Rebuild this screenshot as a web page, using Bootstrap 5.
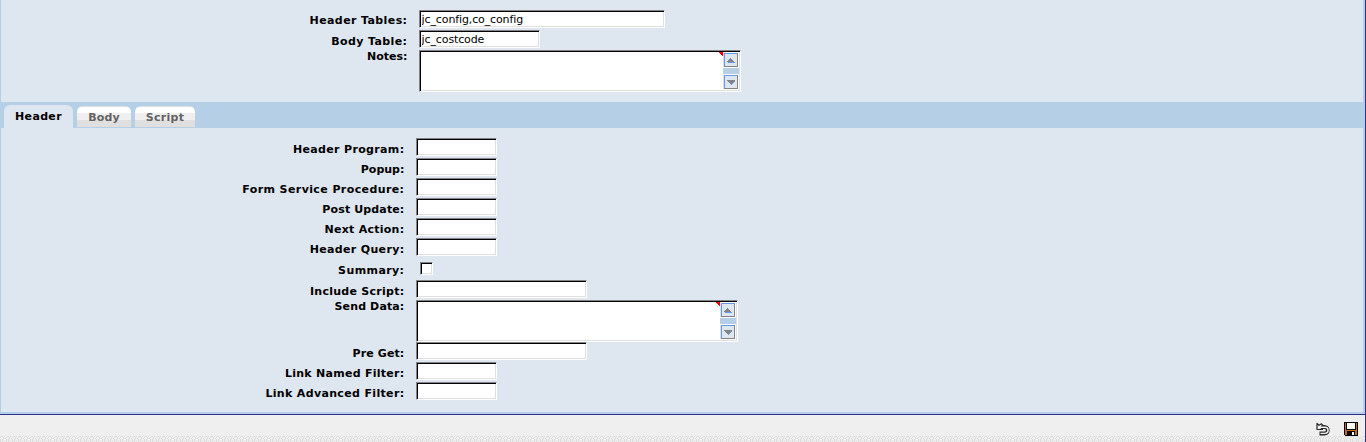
<!DOCTYPE html>
<html lang="en">
<head>
<meta charset="utf-8">
<title>Form setup</title>
<link rel="stylesheet" href="https://cdn.jsdelivr.net/npm/bootstrap@5.3.0/dist/css/bootstrap.min.css">
<style>
body{font:11px/18px Verdana,"DejaVu Sans",sans-serif;color:#000;background:#efefef;height:442px;overflow:hidden}
.frame{border-right:1px solid #31308c;border-bottom:1px solid #31308c;height:415px}
.shell{height:414px;background:#dee6ef;border:solid #b5cfe7;border-width:0 2px 2px 1px}
.top-part{height:102px;padding-top:10px}
.line{height:20px}
.line.tall{height:42px}
.line.check{height:22px}
.lbl{font-weight:700;text-align:right;padding-right:11.6px;width:418px;padding-top:2px;white-space:nowrap}
.lbl.drop{padding-top:3px}
.low .lbl{width:415px;padding-top:3px}
.low .check .lbl{padding-top:4px}
.tall .lbl,.low .tall .lbl{padding-top:1px;line-height:12px}
.k1{letter-spacing:.13px}.k2{letter-spacing:.27px}.k3{letter-spacing:.34px}.k4{letter-spacing:.4px}
.field{height:18px;background:#fff;border:1px solid;border-color:#848284 #fff #fff #848284;box-shadow:inset 1px 1px #000,inset -1px -1px #dedfde;border-radius:0;padding:1px;font-size:11px;line-height:16px;color:#000;outline:0;letter-spacing:-.12px}
input.field{padding-left:1.6px}
.w-s{width:81px}.w-m{width:121px}.w-l{width:171px}.w-x{width:246px}
.area{width:322px;height:42px}
.scroll{width:16px;height:38px;flex:none}
.tick{width:13px;height:13px;margin:4px 0 0 4px;appearance:none}
.tabs{height:26px;background:#b5cfe7;padding:3px 0 0 3px}
.tab{font-weight:700;border:0;border-radius:6px 6px 0 0;height:21px;margin:1px 4px 0 0;padding:2px 0 0;color:#636163;background:linear-gradient(#dedfde 0 1px,#fff 1px 7px,#efefef 7px 14px,#dedfde 14px);line-height:20px;text-align:center}
.tab.on{background:#dee6ef;color:#000;height:23px;margin-top:0;padding:0;line-height:22px;width:69px}
.t-body{width:54px}.t-script{width:60px}
.low{padding-top:10px}
.foot{height:27px;border-right:1px solid #31308c}
</style>
</head>
<body>
<div class="frame">
<main class="shell">
 <section class="top-part">
  <div class="line d-flex"><label class="lbl k4" for="a">Header Tables:</label><input id="a" class="field w-x" value="jc_config,co_config"></div>
  <div class="line d-flex"><label class="lbl drop k4" for="b">Body Table:</label><input id="b" class="field w-m" value="jc_costcode"></div>
  <div class="line tall d-flex"><span class="lbl">Notes:</span>
   <div class="field area d-flex justify-content-end"><svg class="flex-shrink-0" width="4" height="4" shape-rendering="crispEdges"><path d="M0 0h4v4H3V3H2V2H1V1H0z" fill="red"/></svg>
   <svg class="scroll" shape-rendering="crispEdges"><use href="#bar"/></svg></div></div>
 </section>
 <nav class="tabs d-flex"><button class="tab on k3">Header</button><button class="tab t-body k1">Body</button><button class="tab t-script k2">Script</button></nav>
 <section class="low">
  <div class="line d-flex"><label class="lbl k3" for="c">Header Program:</label><input id="c" class="field w-s"></div>
  <div class="line d-flex"><label class="lbl" for="d">Popup:</label><input id="d" class="field w-s"></div>
  <div class="line d-flex"><label class="lbl k4" for="e">Form Service Procedure:</label><input id="e" class="field w-s"></div>
  <div class="line d-flex"><label class="lbl k1" for="f">Post Update:</label><input id="f" class="field w-s"></div>
  <div class="line d-flex"><label class="lbl k2" for="g">Next Action:</label><input id="g" class="field w-s"></div>
  <div class="line d-flex"><label class="lbl k3" for="h">Header Query:</label><input id="h" class="field w-s"></div>
  <div class="line check d-flex"><label class="lbl k4" for="i">Summary:</label><input id="i" type="checkbox" class="field tick"></div>
  <div class="line d-flex"><label class="lbl k2" for="j">Include Script:</label><input id="j" class="field w-l"></div>
  <div class="line tall d-flex"><span class="lbl k1">Send Data:</span>
   <div class="field area d-flex justify-content-end"><svg class="flex-shrink-0" width="4" height="4" shape-rendering="crispEdges"><path d="M0 0h4v4H3V3H2V2H1V1H0z" fill="red"/></svg>
   <svg class="scroll" shape-rendering="crispEdges"><g id="bar"><path d="M0 16h16v6H0z" fill="#b5cfe7"/><path d="M0 1h1v14H0zM0 23h1v14H0z" fill="#dedfde"/><path d="M1 1h14v14H1zM1 23h14v14H1z" fill="#848284"/><path d="M1 1h13v1H2v12H1zM1 23h13v1H2v12H1z" fill="#639aef"/><path d="M2 2h12v12H2zM2 24h12v12H2z" fill="#dee6ef"/><path d="M7 6h1v1h1v1h1v1h1v1H4V9h1V8h1V7h1zM4 28h8v1h-1v1h-1v1H9v1H7v-1H6v-1H5v-1H4z" fill="#848284"/><path d="M5 10h7v1H5zM11 29h1v1h-1v1h-1v1H9v1H8v-1h1v-1h1v-1h1z" fill="#639aef"/></g></svg></div></div>
  <div class="line d-flex"><label class="lbl k1" for="k">Pre Get:</label><input id="k" class="field w-l"></div>
  <div class="line d-flex"><label class="lbl k2" for="l">Link Named Filter:</label><input id="l" class="field w-s"></div>
  <div class="line d-flex"><label class="lbl k3" for="m">Link Advanced Filter:</label><input id="m" class="field w-s"></div>
 </section>
</main>
</div>
<footer class="foot">
 <svg class="d-block" width="1365" height="27" viewBox="0 415 1365 27">
  <defs><pattern id="weave" width="6" height="6" patternUnits="userSpaceOnUse" y="436"><path d="M1 0h2v1H1zM0 1h1v1H0zM3 1h1v2H3zM4 0h1v1H4zM2 3h1v3H2zM5 2h1v1H5zM0 3h1v3H0zM4 4h1v1H4z" fill="#dcdcdc" shape-rendering="crispEdges"/></pattern></defs>
  <path d="M0 436h1365v6H0z" fill="url(#weave)"/>
  <g stroke-linejoin="round"><path d="M1320 427h5a3.300 3.300 0 0 1 0 6.500h-5.500" fill="none" stroke="#292829" stroke-width="3.800"/><path d="M1317 423.500v6h5.500l-1.800-2 1.800-2.500-1-1.200-2.500 1.500z" fill="#efefef" stroke="#292829" stroke-width="1.200"/><path d="M1319 427.200h6a3.100 3.100 0 0 1 0 6.200h-4.500" fill="none" stroke="#f4f4f4" stroke-width="1.400"/></g>
  <g shape-rendering="crispEdges"><path d="M1344 422h14v14h-13v-1h-1z" fill="#000"/><path d="M1345 423h1v12h-1zM1356 423h1v12h-1zM1346 430h10v1h-10zM1346 431h1v4h-1zM1355 431h1v4h-1z" fill="#c66918"/><path d="M1347 423h8v6h-8zM1352 432h2v3h-2z" fill="#fff"/></g>
 </svg>
</footer>
<script src="https://cdn.jsdelivr.net/npm/bootstrap@5.3.0/dist/js/bootstrap.bundle.min.js"></script>
</body>
</html>
